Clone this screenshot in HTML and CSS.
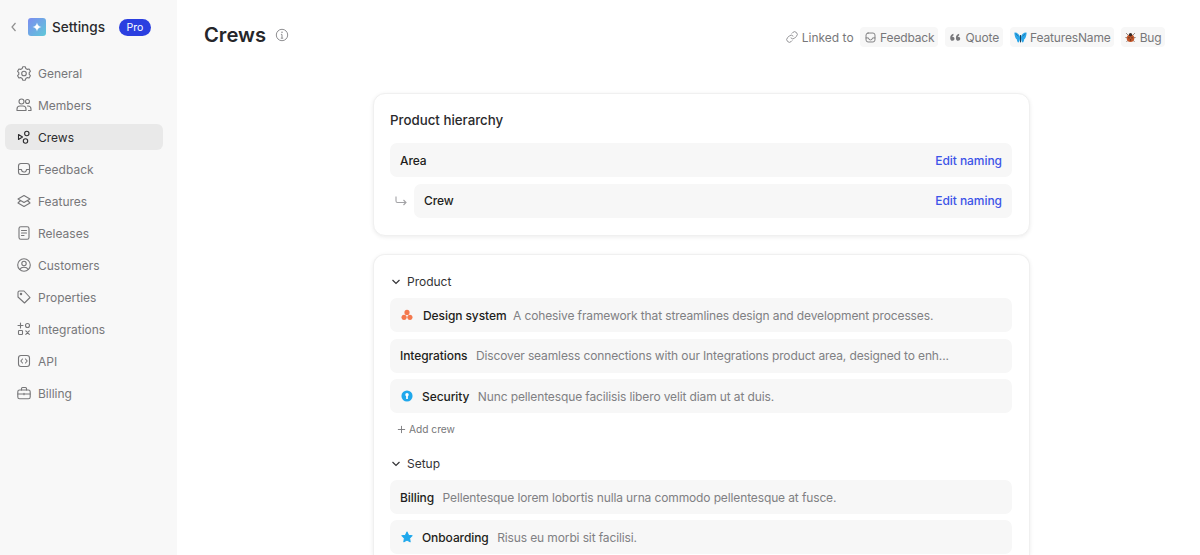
FILE: index.html
```html
<!DOCTYPE html>
<html lang="en">
<head>
<meta charset="utf-8">
<title>Crews</title>
<link rel="stylesheet" href="styles.css">
</head>
<body>
<svg class="sprite" width="0" height="0">
  <defs>
    <linearGradient id="logo" x1="0" y1="0" x2="1" y2="1"><stop offset="0" stop-color="#7c8cf0"/><stop offset="1" stop-color="#5fc9d8"/></linearGradient>
  </defs>
</svg>
<aside class="sidebar">
  <div class="brand">
    <svg class="back" viewBox="0 0 10 12"><path d="M6.500 2 3 6l3.500 4"/></svg>
    <svg class="logo" viewBox="0 0 18 18"><rect width="18" height="18" rx="3" fill="url(#logo)"/><path d="M9 4.500c.4 2.700 1.800 4.100 4.500 4.500-2.700.4-4.100 1.800-4.500 4.500-.4-2.700-1.800-4.100-4.500-4.500 2.700-.4 4.100-1.800 4.500-4.500z" fill="#fff"/></svg>
    <span class="brand-name">Settings</span>
    <span class="pro">Pro</span>
  </div>
  <nav class="nav">
    <a class="nav-item"><svg class="ico" viewBox="0 0 16 16"><path d="M6.700 1.800h2.600l.5 1.700 1.600.9 1.700-.4 1.300 2.300-1.200 1.300v1.800l1.200 1.300-1.300 2.300-1.700-.4-1.600.9-.5 1.700H6.700l-.5-1.700-1.600-.9-1.700.4-1.300-2.300L2.800 9.400V7.600L1.600 6.300l1.300-2.300 1.700.4 1.600-.9z"/><circle cx="8" cy="8.500" r="2.300"/></svg>General</a>
    <a class="nav-item"><svg class="ico" viewBox="0 0 16 16"><circle cx="5.500" cy="4.500" r="2.500"/><circle cx="11.500" cy="4.500" r="2"/><path d="M1 13.500v-1.500a3 3 0 0 1 3-3h3a3 3 0 0 1 3 3v1.500zM11.500 9h.5a3 3 0 0 1 3 3v1.500h-2.500"/></svg>Members</a>
    <a class="nav-item active"><svg class="ico" viewBox="0 0 16 16"><path d="M2.500 5.500 6.500 8 2.500 10.500z"/><circle cx="10.800" cy="4.500" r="2.200"/><circle cx="9.500" cy="12" r="2.200"/></svg>Crews</a>
    <a class="nav-item"><svg class="ico" viewBox="0 0 16 16"><rect x="2.500" y="2.500" width="11" height="11" rx="2.500"/><path d="M2.500 8.500h3a2.500 2.500 0 0 0 5 0h3"/></svg>Feedback</a>
    <a class="nav-item"><svg class="ico" viewBox="0 0 16 16"><path d="M8 2.500 14 6 8 9.500 2 6zM4 8l-2 2 6 3.500 6-3.500-2-2"/></svg>Features</a>
    <a class="nav-item"><svg class="ico" viewBox="0 0 16 16"><rect x="3" y="1.800" width="10" height="12.400" rx="1.800"/><path d="M5.500 5.500h5M5.500 8h5M5.500 10.500h2.500"/></svg>Releases</a>
    <a class="nav-item"><svg class="ico" viewBox="0 0 16 16"><circle cx="8" cy="8" r="6.300"/><circle cx="8" cy="6.500" r="2.200"/><path d="M3.800 12.500c.8-1.500 2.300-2.200 4.200-2.200s3.400.7 4.200 2.200"/></svg>Customers</a>
    <a class="nav-item"><svg class="ico" viewBox="0 0 16 16"><path d="M2 3.500A1.500 1.500 0 0 1 3.500 2H8l6 6.500-5.500 5.500L2 8z"/><circle cx="5" cy="5" r=".7"/></svg>Properties</a>
    <a class="nav-item"><svg class="ico" viewBox="0 0 16 16"><path d="M4.500 2v5M2 4.500h5"/><circle cx="11.500" cy="4.500" r="2"/><rect x="2.500" y="9.500" width="4" height="4" rx=".7"/><path d="m9.800 9.800 3.500 3.500M13.300 9.800l-3.500 3.500"/></svg>Integrations</a>
    <a class="nav-item"><svg class="ico" viewBox="0 0 16 16"><rect x="2.500" y="2.500" width="11" height="11" rx="2.500"/><path d="M6.500 6 4.800 8l1.700 2M9.500 6l1.700 2-1.700 2"/></svg>API</a>
    <a class="nav-item"><svg class="ico" viewBox="0 0 16 16"><rect x="1.800" y="5" width="12.400" height="8.700" rx="1.800"/><path d="M5.500 5V3.500a1 1 0 0 1 1-1h3a1 1 0 0 1 1 1V5M1.800 9h12.400M8 8.200v1.600"/></svg>Billing</a>
  </nav>
</aside>
<main class="main">
  <header class="top">
    <div class="title-wrap">
      <h1 class="title">Crews</h1>
      <svg class="info" viewBox="0 0 14 14"><circle cx="7" cy="7" r="5.700"/><path d="M7 6.500v3.500M5.800 10.200h2.400M5.900 6.400H7"/><circle class="dot" cx="7" cy="4.200" r=".8"/></svg>
    </div>
    <div class="links">
      <svg class="ico link-ico" viewBox="0 0 16 16"><path d="M6.800 9.200a3 3 0 0 0 4.300 0l2-2a3 3 0 0 0-4.300-4.300l-.8.800M9.200 6.800a3 3 0 0 0-4.300 0l-2 2a3 3 0 0 0 4.300 4.300l.8-.8"/></svg>
      <span class="linked">Linked to</span>
      <span class="chip"><svg class="ico chip-ico" viewBox="0 0 16 16"><rect x="2.500" y="2.500" width="11" height="11" rx="2.500"/><path d="M2.500 8.500h3a2.500 2.500 0 0 0 5 0h3"/></svg>Feedback</span>
      <span class="chip"><svg class="chip-ico quote" viewBox="0 0 16 16"><path d="M1.500 8.500C1.500 5.800 3 4.200 5.500 3.500v2c-1 .4-1.500 1-1.600 1.700h.4c1.500 0 2.500 1 2.500 2.400S5.700 12 4.200 12C2.500 12 1.500 10.600 1.500 8.500zM8.500 8.500C8.500 5.800 10 4.200 12.500 3.500v2c-1 .4-1.500 1-1.600 1.700h.4c1.500 0 2.500 1 2.500 2.400s-1.100 2.400-2.600 2.400C9.500 12 8.500 10.600 8.500 8.500z"/></svg>Quote</span>
      <span class="chip"><svg class="chip-ico" viewBox="0 0 16 16"><path d="M.5 2c3-.5 6 1.500 7 5.500 0 2.500-.5 6-2 6.500-1.200 0-2-2.500-2-4C1.500 9.500.5 4.500.5 2zM15.500 2c-3-.5-6 1.500-7 5.500 0 2.500.5 6 2 6.500 1.200 0 2-2.500 2-4 2 -.5 3-5.500 3-8z" fill="#2aa5e8"/><path d="M8 5v9" stroke="#1c3c55" stroke-width="1.300"/><path d="M2 3.500l3.500 3M14 3.500l-3.500 3" stroke="#175f8f" stroke-width=".7"/></svg>FeaturesName</span>
      <span class="chip"><svg class="chip-ico bug" viewBox="0 0 16 16"><path d="M1.500 1.500l4 4M14.500 1.500l-4 4M.5 8h3M12.500 8h3M2 14.500l3-3M14 14.500l-3-3" stroke="#6a5a52" stroke-width="1"/><circle cx="8" cy="9" r="5.500" fill="#c4572a"/><circle cx="8" cy="4" r="2.400" fill="#3a2a25"/><circle cx="5.800" cy="8.500" r="1" fill="#3a2a25"/><circle cx="10.200" cy="8.500" r="1" fill="#3a2a25"/><circle cx="8" cy="11.500" r="1" fill="#3a2a25"/></svg>Bug</span>
    </div>
  </header>
  <div class="content">
    <section class="card hierarchy">
      <h2 class="card-title">Product hierarchy</h2>
      <div class="row"><span class="row-name">Area</span><a class="edit">Edit naming</a></div>
      <div class="nested">
        <svg class="sub-arrow" viewBox="0 0 14 14"><path d="M2 2.500v4.500a1.500 1.500 0 0 0 1.500 1.500H12M9.500 6l2.500 2.500L9.500 11"/></svg>
        <div class="row grow"><span class="row-name">Crew</span><a class="edit">Edit naming</a></div>
      </div>
    </section>
    <section class="card list">
      <div class="group-head"><svg class="caret" viewBox="0 0 10 10"><path d="m1.500 3 3.500 3.500L8.500 3"/></svg>Product</div>
      <div class="rows">
        <div class="row start"><svg class="crew-ico tall" viewBox="0 0 14 14"><circle cx="7" cy="4" r="3" fill="#f4794e"/><circle cx="3.600" cy="9.700" r="3" fill="#f4794e"/><circle cx="10.400" cy="9.700" r="3" fill="#f4794e"/></svg><span class="row-name">Design system</span><span class="desc tight">A cohesive framework that streamlines design and development processes.</span></div>
        <div class="row start"><span class="row-name">Integrations</span><span class="desc">Discover seamless connections with our Integrations product area, designed to enh...</span></div>
        <div class="row start"><svg class="crew-ico" viewBox="0 0 14 14"><circle cx="7" cy="7" r="6.500" fill="#1fa8ec"/><circle cx="7" cy="5.500" r="2" fill="#fff"/><rect x="6" y="6" width="2" height="4.500" fill="#fff"/></svg><span class="row-name">Security</span><span class="desc">Nunc pellentesque facilisis libero velit diam ut at duis.</span></div>
      </div>
      <a class="add"><svg class="plus" viewBox="0 0 10 10"><path d="M5 1v8M1 5h8"/></svg>Add crew</a>
      <div class="group-head setup"><svg class="caret" viewBox="0 0 10 10"><path d="m1.500 3 3.500 3.500L8.500 3"/></svg>Setup</div>
      <div class="rows">
        <div class="row start"><span class="row-name">Billing</span><span class="desc">Pellentesque lorem lobortis nulla urna commodo pellentesque at fusce.</span></div>
        <div class="row start"><svg class="crew-ico" viewBox="0 0 14 14"><path d="M7 1.200l1.800 3.700 4.200.6-3 2.900.7 4.100L7 10.600l-3.700 1.900.7-4.100-3-2.900 4.200-.6z" fill="#1fa8ec" stroke="#1fa8ec" stroke-width="1.200" stroke-linejoin="round"/></svg><span class="row-name">Onboarding</span><span class="desc">Risus eu morbi sit facilisi.</span></div>
      </div>
    </section>
  </div>
</main>
</body>
</html>
```

FILE: styles.css
```css
* { box-sizing: border-box; }
html, body { height: 555px; overflow: hidden; }
body {
  margin: 0;
  display: flex;
  background: #fff;
  color: #1c1c1e;
  font-family: Inter, "Liberation Sans", sans-serif;
  font-size: 12px;
}
.sprite { position: absolute; }
.sidebar {
  width: 177px;
  flex: none;
  background: #f8f8f8;
  padding: 18px 14px 0 5px;
}
.brand {
  display: flex;
  align-items: center;
  height: 18px;
  padding-left: 4px;
}
.back { width: 10px; height: 12px; fill: none; stroke: #8f8f8f; stroke-width: 1.200; }
.logo { width: 18px; height: 18px; margin-left: 9px; }
.brand-name { margin-left: 6px; font-size: 13.600px; font-weight: 500; color: #2a2a2c; }
.pro {
  margin-left: 14px;
  width: 32px;
  height: 17px;
  border-radius: 9px;
  background: #2b3fe0;
  color: #fff;
  font-size: 10.500px;
  line-height: 17px;
  text-align: center;
}
.nav { margin-top: 24px; display: flex; flex-direction: column; gap: 6px; }
.nav-item {
  display: flex;
  align-items: center;
  gap: 6px;
  height: 26px;
  padding-left: 11px;
  border-radius: 6px;
  color: #77777a;
  font-size: 12px;
}
.nav-item.active { background: #e9e9e9; color: #2c2c2e; }
.ico {
  width: 16px;
  height: 16px;
  flex: none;
  fill: none;
  stroke: #767678;
  stroke-width: 1.100;
  stroke-linecap: round;
  stroke-linejoin: round;
}
.active .ico { stroke: #2c2c2e; }
.main { flex: 1; min-width: 0; }
.top {
  display: flex;
  justify-content: space-between;
  align-items: center;
  height: 38px;
  margin-top: 18px;
  padding: 0 35px 0 27px;
}
.title-wrap { display: flex; align-items: center; gap: 9px; margin-top: -6px; }
.title { margin: 0; font-size: 20.200px; font-weight: 600; color: #26262a; }
.info { width: 14px; height: 14px; margin-top: 2px; fill: none; stroke: #8f8f92; stroke-width: 1; }
.info .dot { fill: #8f8f92; stroke: none; }
.links { display: flex; align-items: center; color: #77777a; font-size: 12px; }
.link-ico { width: 14px; height: 14px; margin-right: 3px; stroke: #8f8f92; }
.linked { margin-right: 6px; }
.chip {
  display: flex;
  align-items: center;
  gap: 3.500px;
  height: 20px;
  margin-right: 7px;
  padding: 0 3.500px 0 4px;
  border-radius: 4px;
  background: #f7f7f7;
  letter-spacing: -.15px;
}
.chip:last-child { margin-right: 0; }
.chip-ico { width: 13px; height: 13px; flex: none; }
.chip-ico.bug { width: 11px; height: 11px; }
.quote { fill: #77777a; }
.content { width: 657px; margin: 37px 0 0 196px; display: flex; flex-direction: column; gap: 18px; }
.card {
  background: #fff;
  border: 1px solid #f0f0f0;
  border-radius: 12px;
  box-shadow: 0 1px 4px rgba(0, 0, 0, .08);
  padding: 0 17px 0 16px;
}
.hierarchy { height: 143px; padding-top: 17px; }
.card-title { margin: 0 0 14px; font-size: 13.300px; line-height: 18px; font-weight: 500; color: #2a2a2c; }
.row {
  display: flex;
  justify-content: space-between;
  align-items: center;
  height: 34px;
  padding: 0 10px;
  border-radius: 7px;
  background: #f7f7f7;
  font-size: 12px;
}
.row.start { justify-content: flex-start; white-space: nowrap; }
.row-name { font-weight: 500; color: #1e1e20; letter-spacing: -.08px; }
.edit { color: #3d54e8; font-weight: 500; letter-spacing: -.05px; }
.nested { display: flex; align-items: center; gap: 6px; margin-top: 6.500px; }
.sub-arrow { width: 14px; height: 14px; margin: 0 0 0 4px; flex: none; fill: none; stroke: #a3a3a6; stroke-width: 1.100; }
.grow { flex: 1; }
.list {
  height: 301px;
  padding-top: 18px;
  border-bottom: 0;
  border-radius: 12px 12px 0 0;
  overflow: hidden;
}
.group-head { display: flex; align-items: center; gap: 6px; height: 17px; padding-left: 1px; font-size: 12px; color: #333336; }
.setup { margin-top: 19px; }
.caret { width: 10px; height: 10px; fill: none; stroke: #333336; stroke-width: 1.200; }
.rows { display: flex; flex-direction: column; gap: 6.500px; margin-top: 8px; }
.setup + .rows { gap: 6px; }
.desc { margin-left: 8.500px; color: #808083; letter-spacing: -.125px; }
.desc.tight { margin-left: 6.500px; }
.crew-ico { width: 12px; height: 12px; margin: 0 9px 0 1px; flex: none; }
.crew-ico.tall { margin-right: 10px; }
.add { display: flex; align-items: center; gap: 3px; height: 14px; margin: 9px 0 0 7px; font-size: 10.200px; color: #77777a; }
.plus { width: 9px; height: 9px; fill: none; stroke: #77777a; stroke-width: 1; }
```
